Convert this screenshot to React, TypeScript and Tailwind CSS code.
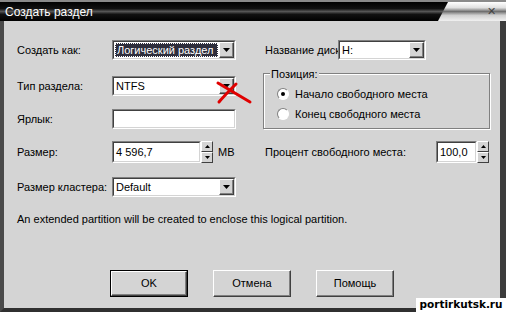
import React from 'react';

const FONT = { fontFamily: '"Liberation Sans", Arial, sans-serif' };

function DropArrow() {
  return (
    <div className="flex h-[16px] w-[15px] items-center justify-center border border-t-white border-l-white border-b-[#404040] border-r-[#404040] bg-[#d4d4d4] shadow-[inset_-1px_-1px_0_#808080]">
      <svg width="7" height="4" viewBox="0 0 7 4">
        <path d="M0 0h7L3.5 4z" fill="#000" />
      </svg>
    </div>
  );
}

function Sunken({ className = '', children }: { className?: string; children?: React.ReactNode }) {
  return (
    <div className={`border border-t-[#808080] border-l-[#808080] border-b-white border-r-white ${className}`}>
      <div className="flex h-full w-full items-center border border-t-[#404040] border-l-[#404040] border-b-[#d4d4d4] border-r-[#d4d4d4] bg-white">
        {children}
      </div>
    </div>
  );
}

function Combo({ value, selected = false, className = '' }: { value: string; selected?: boolean; className?: string }) {
  return (
    <Sunken className={`h-[20px] ${className}`}>
      <div className="flex h-full flex-1 items-center p-[1px]">
        <div
          className={`flex h-full flex-1 items-center pl-[1px] text-[11px] leading-none ${
            selected ? 'border border-dotted border-white bg-[#2e2e3c] text-white' : 'text-black'
          }`}
        >
          {value}
        </div>
      </div>
      <DropArrow />
    </Sunken>
  );
}

function SpinButtons() {
  return (
    <div className="flex h-[22px] w-[12px] flex-col">
      {[0, 1].map((i) => (
        <div
          key={i}
          className="flex flex-1 items-center justify-center border border-t-white border-l-white border-b-[#404040] border-r-[#404040] bg-[#d4d4d4]"
        >
          <svg width="5" height="3" viewBox="0 0 5 3">
            <path d={i === 0 ? 'M0 3h5L2.5 0z' : 'M0 0h5L2.5 3z'} fill="#000" />
          </svg>
        </div>
      ))}
    </div>
  );
}

function Radio({ checked, label }: { checked?: boolean; label: string }) {
  return (
    <div className="flex h-[16px] items-center gap-[6px]">
      <div className="flex h-[12px] w-[12px] items-center justify-center rounded-full border border-t-[#808080] border-l-[#808080] border-b-white border-r-white bg-white">
        {checked && <div className="h-[4px] w-[4px] rounded-full bg-black" />}
      </div>
      <span className="text-[11px] text-black">{label}</span>
    </div>
  );
}

function Button({ label, isDefault = false }: { label: string; isDefault?: boolean }) {
  return (
    <div className={`h-[27px] w-[78px] ${isDefault ? 'border border-black' : ''}`}>
      <div className="flex h-full w-full items-center justify-center border border-t-white border-l-white border-b-[#404040] border-r-[#404040] bg-[#d4d4d4] text-[11px] text-black shadow-[inset_-1px_-1px_0_#808080]">
        {label}
      </div>
    </div>
  );
}

export default function App() {
  return (
    <div className="relative flex h-[312px] w-[506px] flex-col overflow-hidden bg-[#d4d4d4]" style={FONT}>
      {/* title bar */}
      <div className="relative flex h-[21px] shrink-0 items-center border-t-2 border-[#8a8a8a] bg-[linear-gradient(#000_0%,#111_35%,#555_50%,#111_65%,#000_100%)]">
        <span className="pl-[5px] text-[12px] text-white">Создать раздел</span>
        <div className="ml-auto flex h-full w-[68px] items-center justify-end pr-[10px] [clip-path:polygon(10px_0,100%_0,100%_100%,0_100%)] bg-[linear-gradient(#ffffff_0%,#e0e0e0_30%,#707070_50%,#d0d0d0_70%,#f0f0f0_100%)]">
          <span className="text-[11px] leading-none text-[#444]">✕</span>
        </div>
      </div>

      {/* body */}
      <div className="flex flex-1 flex-col border-l-4 border-r-[6px] border-b-4 border-l-[#4a4a4a] border-r-[#3c3c3c] border-b-[#303030] pl-[13px] pt-[19px] text-[11px] text-black">
        <div className="flex gap-[27px]">
          {/* left column */}
          <div className="flex w-[219px] flex-col">
            <div className="flex h-[20px] items-center">
              <span className="w-[95px]">Создать как:</span>
              <Combo value="Логический раздел" selected className="w-[124px]" />
            </div>
            <div className="mt-[16px] flex h-[20px] items-center">
              <span className="w-[95px]">Тип раздела:</span>
              <Combo value="NTFS" className="w-[124px]" />
            </div>
            <div className="mt-[13px] flex h-[20px] items-center">
              <span className="w-[95px]">Ярлык:</span>
              <Sunken className="h-[20px] w-[124px]" />
            </div>
            <div className="mt-[12px] flex h-[22px] items-center">
              <span className="w-[95px]">Размер:</span>
              <Sunken className="h-[22px] w-[89px]">
                <span className="pl-[2px]">4 596,7</span>
              </Sunken>
              <SpinButtons />
              <span className="ml-[5px]">MB</span>
            </div>
            <div className="mt-[14px] flex h-[20px] items-center">
              <span className="w-[95px]">Размер кластера:</span>
              <Combo value="Default" className="w-[124px]" />
            </div>
          </div>

          {/* right column */}
          <div className="flex w-[227px] flex-col">
            <div className="flex h-[20px] items-center">
              <span className="w-[75px] overflow-hidden whitespace-nowrap pl-[2px]">Название диска:</span>
              <Combo value="H:" className="w-[88px]" />
            </div>
            <div className="relative mt-[13px] flex h-[56px] flex-col gap-[4px] border border-[#808080] pl-[13px] pt-[12px] shadow-[inset_1px_1px_0_#fff,1px_1px_0_#fff]">
              <span className="absolute left-[6px] top-[-8px] bg-[#d4d4d4] px-[1px]">Позиция:</span>
              <Radio checked label="Начало свободного места" />
              <Radio label="Конец свободного места" />
            </div>
            <div className="mt-[12px] flex h-[22px] items-center">
              <span className="w-[173px] pl-[2px]">Процент свободного места:</span>
              <Sunken className="h-[22px] w-[41px]">
                <span className="pl-[2px]">100,0</span>
              </Sunken>
              <SpinButtons />
            </div>
          </div>
        </div>

        <div className="mt-[14px]">An extended partition will be created to enclose this logical partition.</div>

        <div className="mt-auto mb-[11px] ml-[93px] flex gap-[25px]">
          <Button label="OK" isDefault />
          <Button label="Отмена" />
          <Button label="Помощь" />
        </div>
      </div>

      {/* hand-drawn red cross over the screenshot */}
      <svg className="absolute left-[214px] top-[80px]" width="40" height="26" viewBox="0 0 40 26">
        <path d="M4 3 C14 9 26 16 36 22" stroke="#e00000" strokeWidth="3" fill="none" strokeLinecap="round" />
        <path d="M5 22 C10 16 16 10 22 4" stroke="#e00000" strokeWidth="3" fill="none" strokeLinecap="round" />
      </svg>

      {/* watermark */}
      <div
        className="absolute bottom-0 right-0 flex h-[14px] w-[90px] items-center justify-center bg-white text-[10.5px] font-bold text-black"
        style={{ fontFamily: '"DejaVu Sans", Verdana, sans-serif' }}
      >
        portirkutsk.ru
      </div>
    </div>
  );
}
